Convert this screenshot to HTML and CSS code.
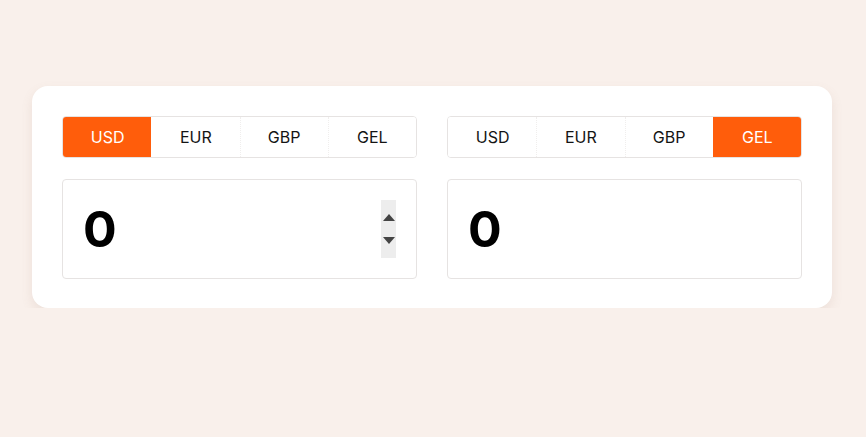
FILE: index.html
```html
<!DOCTYPE html>
<html>
<head>
<meta charset="utf-8">
<link rel="stylesheet" href="styles.css">
</head>
<body>
<main class="card">
  <section class="side">
    <div class="tabs">
      <button class="tab active">USD</button>
      <button class="tab">EUR</button>
      <button class="tab sep">GBP</button>
      <button class="tab sep">GEL</button>
    </div>
    <div class="amount">
      <span class="value">0</span>
      <div class="spinner">
        <span class="arrow up"></span>
        <span class="arrow down"></span>
      </div>
    </div>
  </section>
  <section class="side">
    <div class="tabs">
      <button class="tab">USD</button>
      <button class="tab sep">EUR</button>
      <button class="tab sep">GBP</button>
      <button class="tab active">GEL</button>
    </div>
    <div class="amount">
      <span class="value">0</span>
    </div>
  </section>
</main>
</body>
</html>
```

FILE: styles.css
```css
html, body {
  margin: 0;
  padding: 0;
}
body {
  background: #f9f0eb;
  font-family: Inter, "Noto Sans", sans-serif;
  color: #111;
  padding: 86px 0 0 32px;
}
.card {
  width: 800px;
  box-sizing: border-box;
  background: #fff;
  border-radius: 16px;
  padding: 30px 30px 29px;
  display: grid;
  grid-template-columns: 1fr 1fr;
  gap: 30px;
  box-shadow: 0 5px 12px rgba(150, 110, 90, 0.12);
}
.side {
  display: flex;
  flex-direction: column;
  gap: 21px;
}
.tabs {
  display: grid;
  grid-template-columns: repeat(4, 1fr);
  border: 1px solid #e6e3e2;
  border-radius: 4px;
  overflow: hidden;
  height: 42px;
  box-sizing: border-box;
}
.tab {
  border: 0;
  background: #fff;
  font-family: inherit;
  font-size: 16px;
  color: #141414;
  padding: 0;
  margin: 0;
  border-left: 1px dotted transparent;
}
.tab.sep {
  border-left: 1px dotted #f0eeed;
}
.tab.active {
  background: #ff5d0b;
  color: #fff;
}
.amount {
  height: 100px;
  box-sizing: border-box;
  border: 1px solid #e6e3e2;
  border-radius: 4px;
  padding: 0 20px;
  display: flex;
  align-items: center;
  justify-content: space-between;
}
.value {
  font-size: 50px;
  font-weight: 700;
  color: #000;
  line-height: 1;
}
.spinner {
  width: 15px;
  height: 58px;
  background: #ededed;
  display: flex;
  flex-direction: column;
  align-items: center;
  justify-content: space-between;
  padding: 14px 0 14px;
  box-sizing: border-box;
}
.arrow {
  width: 0;
  height: 0;
  border-left: 6px solid transparent;
  border-right: 6px solid transparent;
}
.arrow.up {
  border-bottom: 7px solid #444;
}
.arrow.down {
  border-top: 7px solid #444;
}
```
